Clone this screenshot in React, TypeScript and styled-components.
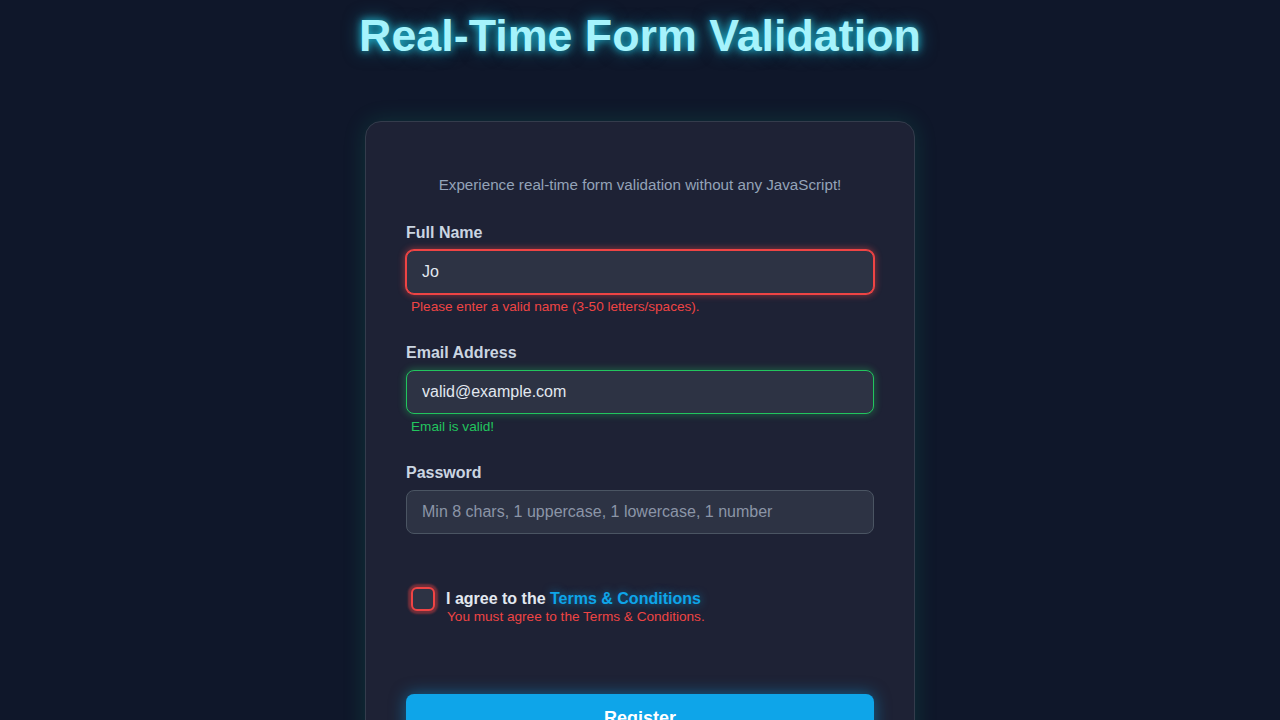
import React from "react";
import styled, { createGlobalStyle } from "styled-components";

const GlobalStyle = createGlobalStyle`
  html, body {
    margin: 0;
    padding: 0;
    background: #0f172a;
    font-family: "Liberation Sans", Arial, sans-serif;
  }
  * { box-sizing: border-box; }
`;

const Page = styled.div`
  min-height: 100vh;
  display: flex;
  flex-direction: column;
  align-items: center;
  background: #0f172a;
`;

const Title = styled.h1`
  margin: 8px 0 0;
  font-size: 44.8px;
  line-height: 54px;
  font-weight: 700;
  color: #a5f3fc;
  text-shadow: 0 0 8px rgba(34, 211, 238, 0.9), 0 0 18px rgba(34, 211, 238, 0.5);
`;

const Card = styled.form`
  margin-top: 59px;
  width: 550px;
  padding: 54px 40px 40px;
  background: #1e2235;
  border: 1px solid #343c4c;
  border-radius: 16px;
  box-shadow: 0 0 22px rgba(16, 185, 129, 0.18);
  display: flex;
  flex-direction: column;
`;

const Subtitle = styled.p`
  margin: 0 0 30px;
  text-align: center;
  font-size: 15.2px;
  line-height: 18px;
  color: #94a3b8;
`;

const Field = styled.div`
  display: flex;
  flex-direction: column;
  margin-bottom: 29px;
`;

const Label = styled.label`
  display: block;
  font-size: 16px;
  line-height: 18px;
  font-weight: 700;
  color: #cbd5e1;
  margin-bottom: 8px;
`;

type Status = "error" | "valid" | "idle";

const Input = styled.input<{ $status: Status }>`
  width: 100%;
  height: 44px;
  padding: 0 15px;
  font-family: "Liberation Sans", Arial, sans-serif;
  font-size: 16px;
  color: #e2e8f0;
  background: #2d3344;
  border-radius: 8px;
  outline: none;
  border: 1px solid
    ${(p) =>
      p.$status === "error" ? "#ef4444" : p.$status === "valid" ? "#22c55e" : "#4b5563"};
  box-shadow: ${(p) =>
    p.$status === "error"
      ? "0 0 0 1px #ef4444, 0 0 6px 2px rgba(239, 68, 68, 0.45)"
      : p.$status === "valid"
      ? "0 0 6px 2px rgba(34, 197, 94, 0.3)"
      : "none"};
  &::placeholder {
    color: #8b95a7;
  }
`;

const Message = styled.div<{ $tone: "error" | "valid" }>`
  margin-top: 5px;
  padding-left: 5px;
  font-size: 13.6px;
  line-height: 16px;
  min-height: 16px;
  color: ${(p) => (p.$tone === "error" ? "#ef4444" : "#22c55e")};
`;

const CheckRow = styled.div`
  display: flex;
  align-items: flex-start;
  gap: 11px;
  margin-top: 6px;
  padding-left: 5px;
`;

const CheckBox = styled.span`
  flex: none;
  width: 24px;
  height: 24px;
  margin-top: -3px;
  border: 2px solid #ef4444;
  border-radius: 6px;
  background: #2d3344;
  box-shadow: 0 0 2px 3px rgba(239, 68, 68, 0.4);
`;

const CheckText = styled.div`
  display: flex;
  flex-direction: column;
`;

const Agree = styled.span`
  font-size: 16px;
  line-height: 18px;
  font-weight: 700;
  color: #e2e8f0;
`;

const TermsLink = styled.a`
  color: #0ea5e9;
  text-decoration: none;
  text-shadow: 0 0 8px rgba(14, 165, 233, 0.6);
`;

const CheckError = styled.span`
  margin-top: 1px;
  font-size: 13.6px;
  line-height: 16px;
  color: #ef4444;
  padding-left: 1px;
`;

const Button = styled.button`
  margin-top: 69px;
  width: 100%;
  height: 48px;
  border: none;
  border-radius: 8px;
  background: #0ea5e9;
  color: #ffffff;
  font-family: "Liberation Sans", Arial, sans-serif;
  font-size: 18px;
  font-weight: 700;
  box-shadow: 0 0 16px rgba(14, 165, 233, 0.5);
  cursor: pointer;
`;

export default function App() {
  return (
    <Page>
      <GlobalStyle />
      <Title>Real-Time Form Validation</Title>
      <Card onSubmit={(e) => e.preventDefault()}>
        <Subtitle>Experience real-time form validation without any JavaScript!</Subtitle>
        <Field>
          <Label htmlFor="name">Full Name</Label>
          <Input id="name" $status="error" defaultValue="Jo" />
          <Message $tone="error">Please enter a valid name (3-50 letters/spaces).</Message>
        </Field>
        <Field>
          <Label htmlFor="email">Email Address</Label>
          <Input id="email" $status="valid" defaultValue="valid@example.com" />
          <Message $tone="valid">Email is valid!</Message>
        </Field>
        <Field>
          <Label htmlFor="pw">Password</Label>
          <Input
            id="pw"
            type="password"
            $status="idle"
            placeholder="Min 8 chars, 1 uppercase, 1 lowercase, 1 number"
          />
          <Message $tone="error" />
        </Field>
        <CheckRow>
          <CheckBox />
          <CheckText>
            <Agree>
              I agree to the <TermsLink href="#">Terms &amp; Conditions</TermsLink>
            </Agree>
            <CheckError>You must agree to the Terms &amp; Conditions.</CheckError>
          </CheckText>
        </CheckRow>
        <Button type="submit">Register</Button>
      </Card>
    </Page>
  );
}
